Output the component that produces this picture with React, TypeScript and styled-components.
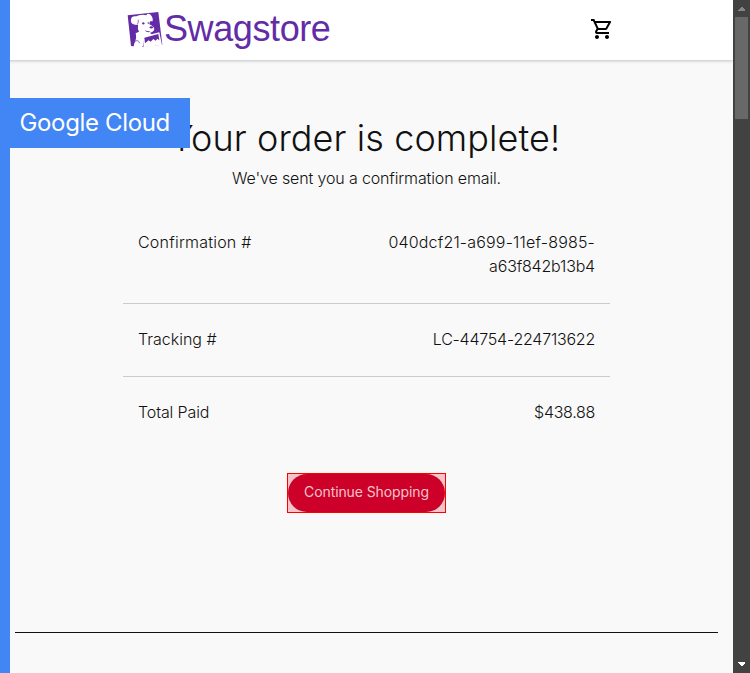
import React from "react";
import styled, { createGlobalStyle } from "styled-components";

const GlobalStyle = createGlobalStyle`
  * { box-sizing: border-box; }
  body { margin: 0; overflow: hidden; background: #f9f9f9; }
`;

const Window = styled.div`
  position: relative;
  display: flex;
  height: 673px;
  width: 750px;
  background: #f9f9f9;
  color: #111111;
  font-family: Inter, "Liberation Sans", sans-serif;
  font-weight: 300;
`;

const Page = styled.div`
  width: 733px;
  display: flex;
  flex-direction: column;
`;

const Header = styled.header`
  height: 60px;
  flex: none;
  display: flex;
  justify-content: space-between;
  padding: 0 119px 0 122px;
  background: #ffffff;
  box-shadow: 0 1px 3px 0 rgba(0, 0, 0, 0.22);
`;

const Brand = styled.div`
  display: flex;
  padding-top: 6px;
`;

const LogoMark = styled.svg`
  width: 45px;
  height: 48px;
  flex: none;
`;

const BrandName = styled.span`
  margin-left: -3px;
  font: 400 36px/46px "Liberation Sans", Arial, sans-serif;
  letter-spacing: -0.4px;
  color: #632ca6;
`;

const CartIcon = styled.svg`
  width: 24px;
  height: 24px;
  margin-top: 17px;
`;

const Main = styled.main`
  width: 487px;
  height: 572px;
  margin: 0 auto;
  padding-top: 54px;
  display: flex;
  flex-direction: column;
  align-items: center;
`;

const Title = styled.h1`
  margin: 0 3px 0 0;
  white-space: nowrap;
  font-size: 36px;
  font-weight: 300;
  line-height: 48px;
  letter-spacing: 0.09px;
`;

const Subtitle = styled.p`
  margin: 4px 0 0;
  font-size: 16px;
  line-height: 24px;
  letter-spacing: -0.14px;
`;

const Details = styled.dl`
  width: 100%;
  margin: 17px 0 0;
`;

const DetailRow = styled.div`
  display: flex;
  justify-content: space-between;
  padding: 23px 15px 25px;
  line-height: 24px;
  font-size: 16px;

  & + & { border-top: 1px solid #cccccc; }
`;

const Term = styled.dt<{ $track: number }>`
  letter-spacing: ${(p) => p.$track}px;
`;

const Value = styled.dd`
  margin: 0;
  text-align: right;
`;

const ValueLine = styled.span<{ $track: number }>`
  display: block;
  letter-spacing: ${(p) => p.$track}px;
`;

const ButtonOutline = styled.div`
  width: 159px;
  height: 40px;
  margin-top: 24px;
  border: 1px solid #ff0000;
  background: #f1c5c9;
`;

const ContinueButton = styled.button`
  display: block;
  width: 157px;
  height: 38px;
  padding: 0 0 2px;
  border: 0;
  border-radius: 19px;
  background: #cc0028;
  color: #f3c5cb;
  font: 400 14px/36px Inter, sans-serif;
  letter-spacing: -0.1px;
  white-space: nowrap;
`;

const FooterRule = styled.hr`
  width: 703px;
  height: 1px;
  margin: 0 0 0 15px;
  border: 0;
  background: #111111;
`;

const PlatformStripe = styled.div`
  position: absolute;
  left: 0;
  top: 0;
  width: 10px;
  height: 673px;
  background: #4285f4;
`;

const PlatformFlag = styled.div`
  position: absolute;
  left: 0;
  top: 98px;
  width: 190px;
  height: 50px;
  padding-left: 19.5px;
  background: #4285f4;
  color: #ffffff;
  font-size: 24px;
  font-weight: 400;
  line-height: 50px;
  letter-spacing: -0.35px;
  white-space: nowrap;
`;

const Scrollbar = styled.div`
  width: 17px;
  height: 673px;
  display: flex;
  flex-direction: column;
  align-items: center;
  background: #424242;
`;

const ScrollArrow = styled.svg`
  width: 17px;
  height: 17px;
  flex: none;
`;

const ScrollTrack = styled.div`
  flex: 1;
`;

const ScrollThumb = styled.div`
  width: 13px;
  height: 102px;
  background: #686868;
`;

const details = [
  {
    label: "Confirmation #",
    labelTrack: 0.22,
    lines: [
      { text: "040dcf21-a699-11ef-8985-", track: 0.18 },
      { text: "a63f842b13b4", track: -0.18 },
    ],
  },
  { label: "Tracking #", labelTrack: 0, lines: [{ text: "LC-44754-224713622", track: -0.23 }] },
  { label: "Total Paid", labelTrack: -0.12, lines: [{ text: "$438.88", track: -0.3 }] },
];

function Logo() {
  return (
    <LogoMark viewBox="0 0 135 144">
      <path fill="#632ca6" d="M17 28 L109 18 L121 116 L55 123 L27 120 Z" />
      <g fill="#fff">
        <path d="M27 40 Q29 28 43 31 L51 28 Q62 24 73 28 Q76 21 84 25 Q94 34 92 46 L84 46 L82 55 Q96 61 97 69 Q95 79 84 80 L90 86 L67 93 L64 118 L56 128 Q48 134 34 126 L37 112 Q45 98 41 82 L51 77 Q46 70 48 57 L39 56 Q24 54 27 40Z" />
        <path d="M64 91 L112 79 L120 117 L65 124Z" />
      </g>
      <g fill="#632ca6">
        <path d="M67 95 L109 84 L112 103 L106 98 L101 104 L94 99 L86 107 L80 103 L69 112Z" />
        <circle cx="64" cy="52" r="3.5" />
        <ellipse cx="88" cy="64" rx="5" ry="3.5" />
        <circle cx="79" cy="51" r="2.5" />
        <path d="M68 72 Q78 78 86 75 L80 79 Q72 79 68 72Z" />
      </g>
      <path d="M46 56 Q50 48 49 41 M36 108 Q49 98 53 112" fill="none" stroke="#632ca6" strokeWidth="2" />
    </LogoMark>
  );
}

export default function App() {
  return (
    <>
      <GlobalStyle />
      <Window>
        <Page>
          <Header>
            <Brand>
              <Logo />
              <BrandName>Swagstore</BrandName>
            </Brand>
            <CartIcon viewBox="0 0 24 24">
              <path d="M15.55 13c.75 0 1.41-.41 1.75-1.03l3.58-6.49A.996.996 0 0 0 20.01 4H5.21l-.94-2H1v2h2l3.6 7.59-1.35 2.44C4.52 15.37 5.48 17 7 17h12v-2H7l1.1-2h7.45zM6.16 6h12.15l-2.76 5H8.53L6.16 6zM7 18c-1.1 0-1.99.9-1.99 2S5.9 22 7 22s2-.9 2-2-.9-2-2-2zm10 0c-1.1 0-1.99.9-1.99 2s.89 2 1.99 2 2-.9 2-2-.9-2-2-2z" />
            </CartIcon>
          </Header>
          <Main>
            <Title>Your order is complete!</Title>
            <Subtitle>We've sent you a confirmation email.</Subtitle>
            <Details>
              {details.map((d) => (
                <DetailRow key={d.label}>
                  <Term $track={d.labelTrack}>{d.label}</Term>
                  <Value>
                    {d.lines.map((line) => (
                      <ValueLine key={line.text} $track={line.track}>{line.text}</ValueLine>
                    ))}
                  </Value>
                </DetailRow>
              ))}
            </Details>
            <ButtonOutline>
              <ContinueButton>Continue Shopping</ContinueButton>
            </ButtonOutline>
          </Main>
          <FooterRule />
        </Page>
        <Scrollbar>
          <ScrollArrow viewBox="0 0 17 17" shapeRendering="crispEdges">
            <path fill="#868686" d="M5 11V10L8 7H9L12 10V11Z" />
          </ScrollArrow>
          <ScrollThumb />
          <ScrollTrack />
          <ScrollArrow viewBox="0 0 17 17" shapeRendering="crispEdges">
            <path fill="#ffffff" d="M5 6V7L8 10H9L12 7V6Z" />
          </ScrollArrow>
        </Scrollbar>
        <PlatformStripe />
        <PlatformFlag>Google Cloud</PlatformFlag>
      </Window>
    </>
  );
}
